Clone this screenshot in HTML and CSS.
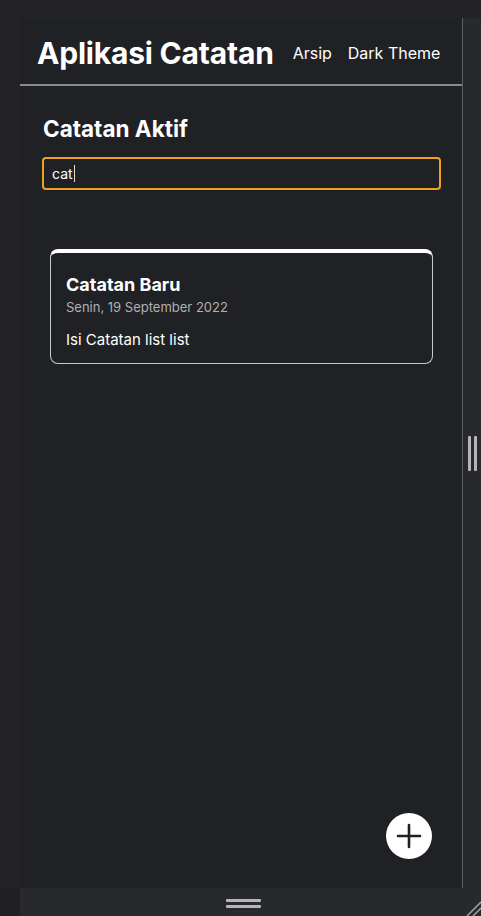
FILE: index.html
```html
<!DOCTYPE html>
<html lang="id">
<head>
<meta charset="utf-8">
<title>Aplikasi Catatan</title>
<link rel="stylesheet" href="styles.css">
</head>
<body>
<div class="shell">
  <div class="app">
    <header class="app-header">
      <h1 class="app-title">Aplikasi Catatan</h1>
      <nav class="nav">
        <a class="nav-link">Arsip</a>
        <a class="nav-link">Dark Theme</a>
      </nav>
    </header>
    <main class="page">
      <h2 class="page-title">Catatan Aktif</h2>
      <div class="search"><span class="search-text">cat</span><span class="caret"></span></div>
      <section class="notes">
        <article class="note">
          <h3 class="note-title">Catatan Baru</h3>
          <p class="note-date">Senin, 19 September 2022</p>
          <p class="note-body">Isi Catatan list list</p>
        </article>
      </section>
    </main>
    <button class="fab" aria-label="Tambah">
      <svg width="26" height="26" viewBox="0 0 26 26"><path d="M13 2v22M2 13h22" stroke="#202124" stroke-width="2.6" stroke-linecap="round"/></svg>
    </button>
  </div>
  <div class="vline"></div>
  <div class="side-strip"><span class="vbar"></span><span class="vbar"></span></div>
  <div class="corner-left"></div>
  <div class="bottom-strip">
    <div class="hbars"><span class="hbar"></span><span class="hbar"></span></div>
    <svg class="resize" width="16" height="16" viewBox="0 0 16 16"><path d="M2 16L16 2M8 16L16 8" stroke="#9a9a9a" stroke-width="1.6"/></svg>
  </div>
</div>
</body>
</html>
```
FILE: styles.css
```css
* { box-sizing: border-box; }
html, body { margin: 0; padding: 0; }
body {
  background: #232326;
  font-family: Inter, "Noto Sans", sans-serif;
  color: #fff;
  width: 481px;
  height: 916px;
  overflow: hidden;
}
.shell {
  display: grid;
  grid-template-columns: 20px 442px 1px 18px;
  grid-template-rows: 18px 870px 28px;
  height: 916px;
}
.app {
  grid-column: 2;
  grid-row: 2;
  background: #202124;
  position: relative;
  display: flex;
  flex-direction: column;
}
.vline { grid-column: 3; grid-row: 2; background: #5a5b5e; }
.side-strip {
  grid-column: 4;
  grid-row: 2;
  background: #28292c;
  display: flex;
  justify-content: center;
  align-items: center;
  gap: 3px;
}
.vbar { width: 3px; height: 35px; background: #b5b5b5; border-radius: 1px; }
.corner-left { grid-column: 1; grid-row: 3; background: #202022; }
.bottom-strip {
  grid-column: 2 / 5;
  grid-row: 3;
  background: #28292c;
  position: relative;
  display: flex;
  justify-content: center;
  padding-top: 11px;
  padding-right: 15px;
}
.hbars { display: flex; flex-direction: column; gap: 3px; }
.hbar { width: 35px; height: 3px; background: #b5b5b5; border-radius: 1px; }
.resize { position: absolute; right: 0; bottom: 0; }

.app-header {
  display: flex;
  align-items: center;
  height: 68px;
  padding: 4px 17px 0 17px;
  border-bottom: 2px solid #8a8b8d;
  white-space: nowrap;
}
.app-title {
  margin: 0;
  font-size: 30px;
  font-weight: 700;
  letter-spacing: -0.2px;
  flex-shrink: 0;
}
.nav { display: flex; gap: 16px; margin-left: 19px; flex-shrink: 0; }
.nav-link { font-size: 16px; color: #fff; }

.page { padding: 28px 21px 0 22px; }
.page-title {
  margin: 0 0 0 1px;
  font-size: 22.5px;
  font-weight: 700;
  line-height: 30px;
}
.search {
  margin-top: 13px;
  height: 33px;
  border: 2px solid #f0a020;
  border-radius: 4px;
  display: flex;
  align-items: center;
  padding-left: 8px;
  font-size: 14px;
}
.caret { width: 1px; height: 17px; background: #ddd; margin-left: 1px; }
.notes { padding: 59px 0 0 8px; }
.note {
  width: 383px;
  border: 1px solid #c9c9c9;
  border-top: 4px solid #fff;
  border-radius: 8px;
  padding: 20px 15px 12px;
}
.note-title { margin: 0; font-size: 18px; font-weight: 700; line-height: 24px; }
.note-date { margin: 1px 0 0; font-size: 13px; color: #b0b0b3; line-height: 18px; }
.note-body { margin: 13px 0 0; font-size: 15px; line-height: 22px; }

.fab {
  position: absolute;
  left: 366px;
  top: 795px;
  width: 46px;
  height: 46px;
  border-radius: 50%;
  background: #fff;
  border: none;
  padding: 0;
  display: flex;
  align-items: center;
  justify-content: center;
}
```
